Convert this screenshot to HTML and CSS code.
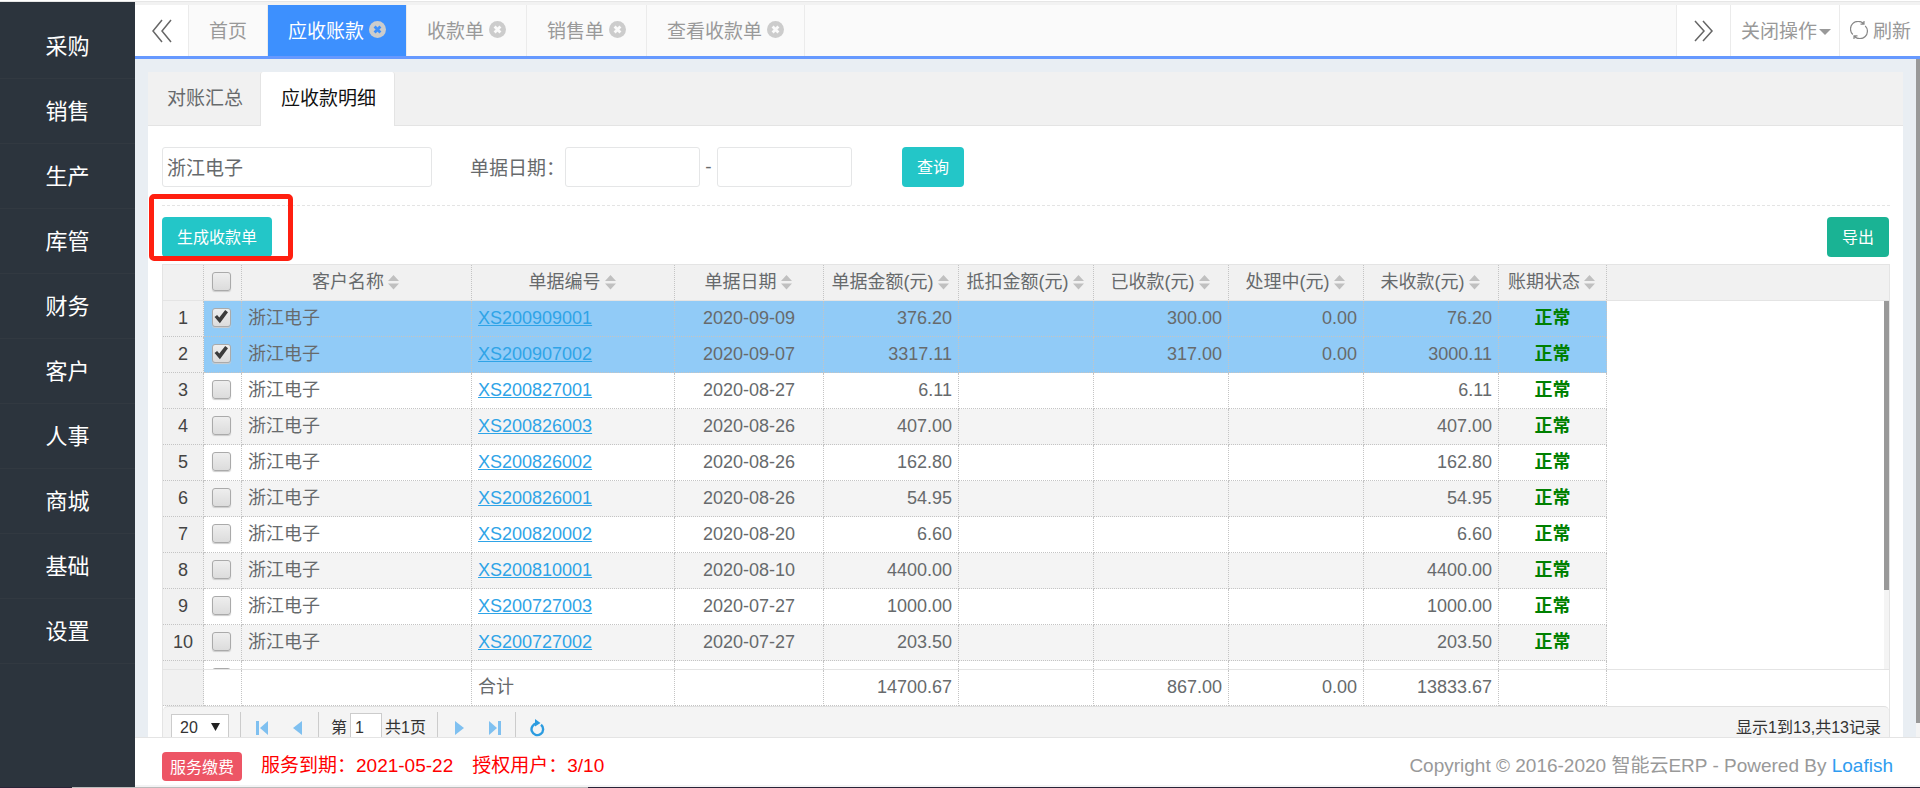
FILE: index.html
```html
<!DOCTYPE html>
<html lang="zh-CN">
<head>
<meta charset="utf-8">
<title>智能云ERP</title>
<link rel="stylesheet" href="styles.css">
</head>
<body>
<svg class="defs" aria-hidden="true">
  <symbol id="close" viewBox="0 0 17 17"><circle cx="8.500" cy="8.500" r="8.500" fill="#ccc"/><path d="M5.600 5.600l5.800 5.800M11.400 5.600l-5.800 5.800" stroke="currentColor" stroke-width="2.800"/></symbol>
  <symbol id="sort" viewBox="0 0 11 15"><path d="M5.500 0L11 6H0zM0 8.500h11L5.500 14.500z" fill="#c0c0c0"/></symbol>
</svg>
<div class="app">
  <nav class="side">
    <a href="#">采购</a><a href="#">销售</a><a href="#">生产</a><a href="#">库管</a><a href="#">财务</a><a href="#">客户</a><a href="#">人事</a><a href="#">商城</a><a href="#">基础</a><a href="#">设置</a>
  </nav>
  <div class="main">
    <header class="tabs">
      <button class="arrow" aria-label="向左"><svg width="22" height="24" viewBox="0 0 22 24"><path d="M11 1L2 12l9 11M20 1l-9 11 9 11" fill="none" stroke="#666" stroke-width="1.500"/></svg></button>
      <a class="tab" href="#">首页</a>
      <a class="tab on" href="#">应收账款<svg width="17" height="17"><use href="#close"/></svg></a>
      <a class="tab" href="#">收款单<svg width="17" height="17"><use href="#close"/></svg></a>
      <a class="tab" href="#">销售单<svg width="17" height="17"><use href="#close"/></svg></a>
      <a class="tab" href="#">查看收款单<svg width="17" height="17"><use href="#close"/></svg></a>
      <span class="space"></span>
      <button class="arrow right" aria-label="向右"><svg width="22" height="24" viewBox="0 0 22 24"><path d="M3 2l9 10-9 10M11 2l9 10-9 10" fill="none" stroke="#666" stroke-width="1.500"/></svg></button>
      <button class="act">关闭操作<svg class="caret" width="12" height="6" viewBox="0 0 12 6"><path d="M0 0h12L6 6z" fill="#999"/></svg></button>
      <button class="act refresh"><svg width="18" height="18" viewBox="0 0 18 18"><path d="M2.800 13.500A7.500 7.500 0 0 1 13.500 2.500M15.200 4.800A7.500 7.500 0 0 1 4.500 15.500M10.500 3.200H14V0M7.500 14.800H4V18" fill="none" stroke="#888" stroke-width="1.200"/></svg>刷新</button>
    </header>
    <main class="content">
      <section class="panel">
        <div class="subtabs"><a href="#">对账汇总</a><a class="on" href="#">应收款明细</a></div>
        <div class="body">
          <form class="filter">
            <input class="cust" type="text" value="浙江电子" aria-label="客户名称">
            <label for="d1">单据日期：</label>
            <input class="date" id="d1" type="text">
            <span class="dash">-</span>
            <input class="date" type="text" aria-label="结束日期">
            <button class="btn query" type="button">查询</button>
          </form>
          <div class="tools">
            <div class="marked"><button class="btn">生成收款单</button><span class="frame"></span></div>
            <button class="btn green">导出</button>
          </div>
          <div class="grid">
            <div class="head">
              <table>
                <colgroup><col class="c-no"><col class="c-ck"><col class="c-name"><col class="c-code"><col class="c-date"><col class="c-m"><col class="c-m"><col class="c-m"><col class="c-m"><col class="c-m"><col class="c-st"></colgroup>
                <thead><tr><th></th><th class="ck"><input type="checkbox" aria-label="全选"></th>
                <th>客户名称<svg><use href="#sort"/></svg></th><th>单据编号<svg><use href="#sort"/></svg></th><th>单据日期<svg><use href="#sort"/></svg></th><th>单据金额(元)<svg><use href="#sort"/></svg></th><th>抵扣金额(元)<svg><use href="#sort"/></svg></th><th>已收款(元)<svg><use href="#sort"/></svg></th><th>处理中(元)<svg><use href="#sort"/></svg></th><th>未收款(元)<svg><use href="#sort"/></svg></th><th>账期状态<svg><use href="#sort"/></svg></th></tr></thead>
              </table>
            </div>
            <div class="rows">
              <table>
                <colgroup><col class="c-no"><col class="c-ck"><col class="c-name"><col class="c-code"><col class="c-date"><col class="c-m"><col class="c-m"><col class="c-m"><col class="c-m"><col class="c-m"><col class="c-st"></colgroup>
                <tbody>
                <tr class="sel"><td class="no">1</td><td class="ck"><input type="checkbox" aria-label="选择1" checked></td><td>浙江电子</td><td><a href="#">XS200909001</a></td><td class="mid">2020-09-09</td><td class="num">376.20</td><td></td><td class="num">300.00</td><td class="num">0.00</td><td class="num">76.20</td><td class="ok">正常</td></tr>
                <tr class="sel"><td class="no">2</td><td class="ck"><input type="checkbox" aria-label="选择2" checked></td><td>浙江电子</td><td><a href="#">XS200907002</a></td><td class="mid">2020-09-07</td><td class="num">3317.11</td><td></td><td class="num">317.00</td><td class="num">0.00</td><td class="num">3000.11</td><td class="ok">正常</td></tr>
                <tr><td class="no">3</td><td class="ck"><input type="checkbox" aria-label="选择3"></td><td>浙江电子</td><td><a href="#">XS200827001</a></td><td class="mid">2020-08-27</td><td class="num">6.11</td><td></td><td></td><td></td><td class="num">6.11</td><td class="ok">正常</td></tr>
                <tr><td class="no">4</td><td class="ck"><input type="checkbox" aria-label="选择4"></td><td>浙江电子</td><td><a href="#">XS200826003</a></td><td class="mid">2020-08-26</td><td class="num">407.00</td><td></td><td></td><td></td><td class="num">407.00</td><td class="ok">正常</td></tr>
                <tr><td class="no">5</td><td class="ck"><input type="checkbox" aria-label="选择5"></td><td>浙江电子</td><td><a href="#">XS200826002</a></td><td class="mid">2020-08-26</td><td class="num">162.80</td><td></td><td></td><td></td><td class="num">162.80</td><td class="ok">正常</td></tr>
                <tr><td class="no">6</td><td class="ck"><input type="checkbox" aria-label="选择6"></td><td>浙江电子</td><td><a href="#">XS200826001</a></td><td class="mid">2020-08-26</td><td class="num">54.95</td><td></td><td></td><td></td><td class="num">54.95</td><td class="ok">正常</td></tr>
                <tr><td class="no">7</td><td class="ck"><input type="checkbox" aria-label="选择7"></td><td>浙江电子</td><td><a href="#">XS200820002</a></td><td class="mid">2020-08-20</td><td class="num">6.60</td><td></td><td></td><td></td><td class="num">6.60</td><td class="ok">正常</td></tr>
                <tr><td class="no">8</td><td class="ck"><input type="checkbox" aria-label="选择8"></td><td>浙江电子</td><td><a href="#">XS200810001</a></td><td class="mid">2020-08-10</td><td class="num">4400.00</td><td></td><td></td><td></td><td class="num">4400.00</td><td class="ok">正常</td></tr>
                <tr><td class="no">9</td><td class="ck"><input type="checkbox" aria-label="选择9"></td><td>浙江电子</td><td><a href="#">XS200727003</a></td><td class="mid">2020-07-27</td><td class="num">1000.00</td><td></td><td></td><td></td><td class="num">1000.00</td><td class="ok">正常</td></tr>
                <tr><td class="no">10</td><td class="ck"><input type="checkbox" aria-label="选择10"></td><td>浙江电子</td><td><a href="#">XS200727002</a></td><td class="mid">2020-07-27</td><td class="num">203.50</td><td></td><td></td><td></td><td class="num">203.50</td><td class="ok">正常</td></tr>
                <tr><td class="no"></td><td class="ck"><input type="checkbox" aria-label="选择11"></td><td></td><td></td><td></td><td></td><td></td><td></td><td></td><td></td><td></td></tr>
                </tbody>
              </table>
              <div class="track"><div class="thumb"></div></div>
            </div>
            <div class="total">
              <table>
                <colgroup><col class="c-no"><col class="c-ck"><col class="c-name"><col class="c-code"><col class="c-date"><col class="c-m"><col class="c-m"><col class="c-m"><col class="c-m"><col class="c-m"><col class="c-st"></colgroup>
                <tbody><tr><td class="no"></td><td></td><td></td><td>合计</td><td></td><td class="num">14700.67</td><td></td><td class="num">867.00</td><td class="num">0.00</td><td class="num">13833.67</td><td></td></tr></tbody>
              </table>
            </div>
            <div class="pager">
              <select aria-label="每页条数"><option>20</option></select>
              <div class="nav">
                <button aria-label="首页"><svg width="14" height="14" viewBox="0 0 14 14"><path d="M1 0h3v14H1zM13 0v14L5 7z" fill="#7fc0f0"/></svg></button>
                <button aria-label="上一页"><svg width="14" height="14" viewBox="0 0 14 14"><path d="M11 0v14L2 7z" fill="#7fc0f0"/></svg></button>
              </div>
              <label for="pg">第</label><input id="pg" type="text" value="1"><span class="pages">共1页</span>
              <div class="nav">
                <button aria-label="下一页"><svg width="14" height="14" viewBox="0 0 14 14"><path d="M3 0v14l9-7z" fill="#7fc0f0"/></svg></button>
                <button aria-label="末页"><svg width="14" height="14" viewBox="0 0 14 14"><path d="M1 0v14l8-7zM10 0h3v14h-3z" fill="#7fc0f0"/></svg></button>
              </div>
              <button class="reload" aria-label="刷新"><svg width="16" height="18" viewBox="0 0 16 18"><path d="M12 5.800A5.800 5.800 0 1 1 8 4.500" fill="none" stroke="#2c9ce0" stroke-width="2.400"/><path d="M6 0l5.500 4L6 7.500z" fill="#2c9ce0"/></svg></button>
              <span class="info">显示1到13,共13记录</span>
            </div>
          </div>
        </div>
      </section>
      <div class="pagebar"><div></div></div>
    </main>
    <footer class="foot">
      <button class="pay">服务缴费</button>
      <span class="warn">服务到期：2021-05-22</span><span class="warn">授权用户：3/10</span>
      <span class="copy">Copyright © 2016-2020 智能云ERP - Powered By <a href="#">Loafish</a></span>
    </footer>
  </div>
</div>
<div class="edge"></div>
</body>
</html>
```
FILE: styles.css
```css
* { box-sizing: border-box; }
body, button, input, select {
  font-family: "Liberation Sans", "Noto Sans CJK SC", sans-serif;
}
body {
  margin: 0;
  height: 100vh;
  display: flex;
  flex-direction: column;
  overflow: hidden;
  font-size: 19px;
  color: #676a6c;
  background: #fff;
}
a { text-decoration: none; color: inherit; }
button { cursor: pointer; }
.defs { display: none; }
.app {
  flex: 1;
  min-height: 0;
  display: flex;
  margin-top: 1px;
  border-top: 1px solid #e6e6e6;
}
.side {
  width: 135px;
  flex: none;
  padding-top: 12px;
  background: #2c343d;
}
.side a {
  display: block;
  height: 65px;
  line-height: 66px;
  font-size: 22px;
  text-align: center;
  color: #fff;
  border-bottom: 1px solid #323941;
}
.main {
  flex: 1;
  min-width: 0;
  display: flex;
  flex-direction: column;
}
.tabs {
  flex: none;
  display: flex;
  height: 57px;
  border-top: 3px solid #f2f2f2;
  border-bottom: 3px solid #6699ff;
  background: #fafafa;
  color: #999;
}
.arrow {
  width: 54px;
  padding: 0;
  border: 0;
  border-right: 1px solid #ebebeb;
  background: #fff;
  display: flex;
  align-items: center;
  justify-content: center;
}
.arrow.right { width: 55px; border-left: 1px solid #ebebeb; }
.tab {
  display: flex;
  align-items: center;
  gap: 5px;
  padding: 0 20px 2px;
  border-right: 1px solid #ebebeb;
  color: #999;
}
.tab svg { color: #fafafa; }
.tab.on { background: #3d90fe; color: #fff; }
.tab.on svg { color: #3d90fe; }
.space { flex: 1; }
.act {
  display: flex;
  align-items: center;
  gap: 2px;
  padding: 0 8px 2px 10px;
  border: 0;
  border-right: 1px solid #ebebeb;
  background: #fff;
  font-size: 19px;
  color: #999;
}
.caret { margin-top: 4px; }
.refresh { gap: 5px; padding-right: 9px; border-right: 0; }
.content {
  position: relative;
  flex: 1;
  min-height: 0;
  overflow: hidden;
  padding: 13px 17px 0 13px;
  background: #e9eef3;
}
.panel { background: #fff; }
.subtabs {
  display: flex;
  height: 54px;
  background: #f1f1f1;
  border-bottom: 1px solid #e4e4e4;
}
.subtabs a {
  height: 54px;
  line-height: 54px;
  padding: 0 17px 0 19px;
}
.subtabs .on {
  padding: 0 18px 0 20px;
  background: #fff;
  color: #111;
  border: solid #e4e4e4;
  border-width: 0 1px;
  border-radius: 3px 3px 0 0;
}
.body { padding: 21px 13px 0 14px; }
.filter {
  display: flex;
  align-items: center;
  padding-bottom: 18px;
  border-bottom: 1px dashed #e4e4e4;
}
.filter input {
  height: 40px;
  padding: 0 4px 2px;
  border: 1px solid #e5e6e7;
  border-radius: 3px;
  font-size: 19px;
  color: #676a6c;
  background: #fff;
}
.filter label { padding-bottom: 2px; }
.filter .cust { width: 270px; margin-right: 38px; }
.filter .date { width: 135px; }
.dash { width: 17px; text-align: center; }
.btn {
  height: 40px;
  padding: 0 15px 2px;
  border: 0;
  border-radius: 4px;
  background: #23c6c8;
  color: #fff;
  font-size: 16px;
}
.query { margin-left: 50px; }
.green { background: #1ab394; }
.tools {
  display: flex;
  justify-content: space-between;
  padding: 11px 1px 7px 0;
}
.marked { position: relative; }
.frame {
  position: absolute;
  left: -13px;
  top: -23px;
  width: 144px;
  height: 67px;
  border: 5px solid #ff1f10;
  border-radius: 5px;
}
.grid {
  border: 1px solid #e4e4e4;
  border-bottom: 0;
  font-size: 18px;
}
.head { background: #f1f1f1; border-bottom: 1px solid #e4e4e4; }
table {
  table-layout: fixed;
  width: 1444px;
  border-spacing: 0;
}
.c-no { width: 41px; }
.c-ck { width: 38px; }
.c-name { width: 230px; }
.c-code { width: 203px; }
.c-date { width: 149px; }
.c-m { width: 135px; }
.c-st { width: 108px; }
th, td {
  height: 36px;
  padding: 0 6px 2px;
  line-height: 24px;
  border-right: 1px dotted #c4c4c4;
  border-bottom: 1px dotted #c4c4c4;
  text-align: left;
  white-space: nowrap;
}
th {
  height: 35px;
  padding: 0 2px 2px 0;
  border-bottom: 0;
  font-weight: normal;
  text-align: center;
}
th svg { width: 11px; height: 15px; margin-left: 4px; vertical-align: -2px; }
.rows {
  position: relative;
  height: 368px;
  overflow: hidden;
}
.rows tr:nth-child(even) { background: #f4f4f4; }
.rows tr.sel { background: #91cbf7; }
.rows td a { color: #2fa4e7; text-decoration: underline; }
td.no { background: #f1f1f1; text-align: center; padding: 0 0 2px; color: #444; }
td.mid { text-align: center; }
td.num { text-align: right; }
td.ok { text-align: center; font-weight: bold; color: #008000; }
.ck, td.ck { padding: 0 2px 3px 0; text-align: center; }
.ck input {
  appearance: none;
  display: block;
  width: 19px;
  height: 19px;
  margin: 0 auto;
  border: 1px solid #aaa;
  border-radius: 3px;
  background: linear-gradient(#eee, #dcdcdc);
  box-shadow: 0 1px 1px #ccc;
}
.ck input:checked::before {
  content: "";
  display: block;
  width: 14px;
  height: 14px;
  margin: 1px;
  background: #3c3c3c;
  clip-path: polygon(4% 54%, 22% 40%, 38% 58%, 80% 4%, 100% 20%, 42% 98%);
}
.track {
  position: absolute;
  top: 0;
  right: 0;
  width: 5px;
  height: 100%;
  background: #f4f4f4;
}
.thumb { height: 289px; background: #999; }
.total { border-top: 1px solid #e4e4e4; }
.pager {
  display: flex;
  align-items: center;
  height: 42px;
  padding: 0 8px;
  background: #f4f4f4;
  border-top: 1px solid #e0e0e0;
  border-radius: 5px 5px 0 0;
  font-size: 16px;
  line-height: 18px;
  color: #333;
}
.pager select {
  appearance: none;
  width: 58px;
  height: 28px;
  margin-right: 11px;
  padding: 0 8px;
  border: 1px solid #ccc;
  background: #fff url("data:image/svg+xml,%3Csvg xmlns='http://www.w3.org/2000/svg' viewBox='0 0 9 8'%3E%3Cpath d='M0 0h9L4.500 8z' fill='%23222'/%3E%3C/svg%3E") no-repeat 39px 8px / 9px 8px;
  font-size: 16px;
  color: #333;
}
.nav {
  display: flex;
  align-items: center;
  height: 32px;
  padding: 0 2px 0 3px;
  border: solid #ccc;
  border-width: 0 1px;
}
.pager button {
  display: flex;
  justify-content: center;
  width: 36px;
  padding: 0;
  border: 0;
  background: none;
}
.pager .reload { margin-left: 3px; }
.pager label { margin-left: 12px; }
.pager input {
  width: 32px;
  height: 30px;
  margin: 0 3px;
  padding: 0 4px;
  border: 1px solid #ccc;
  font-size: 16px;
  color: #333;
}
.pages { margin-right: 11px; }
.info { margin-left: auto; }
.pagebar {
  position: absolute;
  top: 0;
  right: 0;
  width: 4px;
  height: 100%;
  background: #f4f4f4;
}
.pagebar div { height: 98%; background: #999; }
.foot {
  flex: none;
  display: flex;
  align-items: center;
  gap: 19px;
  height: 50px;
  padding: 3px 27px 0;
  border-top: 1px solid #e4e4e4;
  border-bottom: 2px solid #f3f3f4;
  color: #999;
}
.pay {
  height: 29px;
  padding: 0 8px;
  margin-top: 6px;
  border: 0;
  border-radius: 4px;
  background: #ed5565;
  color: #fff;
  font-size: 16px;
}
.warn { color: #f00; }
.copy { margin-left: auto; }
.copy a { color: #2f9cf0; }
.edge {
  flex: none;
  height: 1px;
  background: linear-gradient(90deg, #2a2438 72px, #bbb 72px, #bbb 588px, #2a2438 588px);
}
```
